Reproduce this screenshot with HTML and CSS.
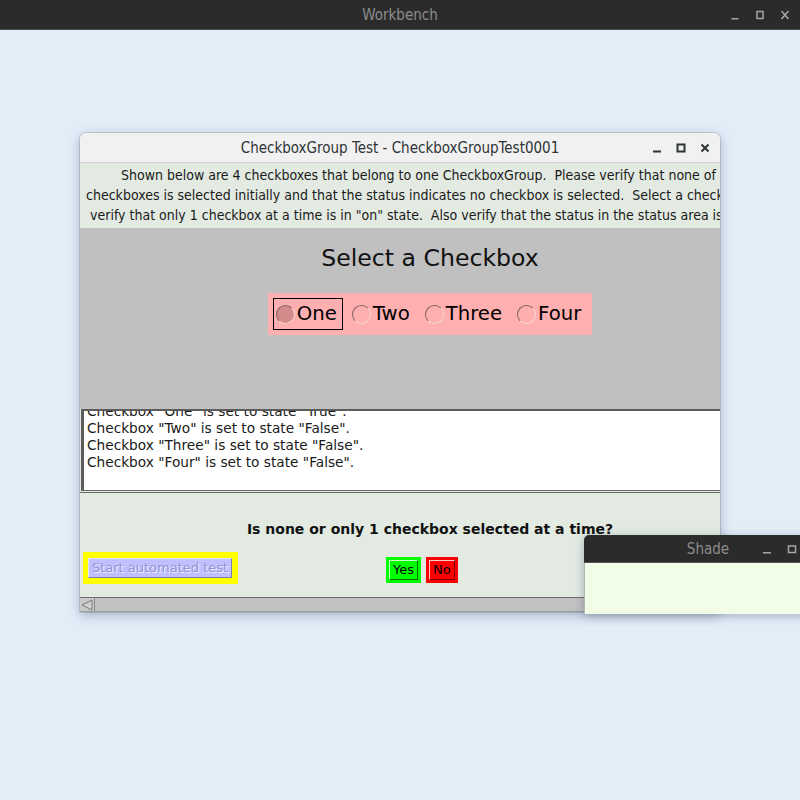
FILE: index.html
```html
<!DOCTYPE html>
<html>
<head>
<meta charset="utf-8">
<title>Workbench</title>
<link rel="stylesheet" href="styles.css">
</head>
<body>
<div class="desktop">
  <header class="topbar">
    <span></span>
    <span class="topbar-title">Workbench</span>
    <div class="wm-controls light">
      <svg class="ico" viewBox="0 0 10 10"><rect x="1.5" y="8" width="7" height="1.5"/></svg>
      <svg class="ico" viewBox="0 0 10 10"><rect class="st" x="2" y="1.5" width="6" height="7"/></svg>
      <svg class="ico" viewBox="0 0 10 10"><path class="st" d="M1.5 1 L8.5 9 M8.5 1 L1.5 9"/></svg>
    </div>
  </header>

  <div class="dialog">
    <div class="dlg-title">
      <span></span>
      <span class="dlg-title-text">CheckboxGroup Test - CheckboxGroupTest0001</span>
      <div class="wm-controls dark">
        <svg class="ico" viewBox="0 0 10 10"><rect x="1" y="7.5" width="8" height="2"/></svg>
        <svg class="ico" viewBox="0 0 10 10"><rect class="st" x="1.5" y="1.5" width="7" height="7"/></svg>
        <svg class="ico" viewBox="0 0 10 10"><path class="st" d="M1.5 1.5 L8.5 8.5 M8.5 1.5 L1.5 8.5"/></svg>
      </div>
    </div>
    <div class="dlg-body">
      <div class="inner">
        <div class="instructions">
          <div class="ins-line l1">Shown below are 4 checkboxes that belong to one CheckboxGroup.  Please verify that none of the</div>
          <div class="ins-line l2">checkboxes is selected initially and that the status indicates no checkbox is selected.  Select a checkbox and</div>
          <div class="ins-line l3">verify that only 1 checkbox at a time is in "on" state.  Also verify that the status in the status area is updated</div>
        </div>

        <div class="test-panel">
          <div class="heading">Select a Checkbox</div>
          <div class="group">
            <div class="cb focused"><span class="radio on"></span><span class="cb-label">One</span></div>
            <div class="cb"><span class="radio"></span><span class="cb-label">Two</span></div>
            <div class="cb"><span class="radio"></span><span class="cb-label">Three</span></div>
            <div class="cb"><span class="radio"></span><span class="cb-label">Four</span></div>
          </div>
        </div>

        <div class="status">
          <div class="status-lines">
            <div>Checkbox "One" is set to state "True".</div>
            <div>Checkbox "Two" is set to state "False".</div>
            <div>Checkbox "Three" is set to state "False".</div>
            <div>Checkbox "Four" is set to state "False".</div>
          </div>
        </div>

        <div class="question-panel">
          <div class="question">Is none or only 1 checkbox selected at a time?</div>
          <div class="actions">
            <div class="auto-wrap"><span class="auto-btn">Start automated test</span></div>
            <div class="yn">
              <span class="yn-btn yes"><span class="yn-face">Yes</span></span>
              <span class="yn-btn no"><span class="yn-face">No</span></span>
            </div>
          </div>
        </div>
      </div>
      <div class="hscroll">
        <span class="arrow-btn">
          <svg viewBox="0 0 14 12" width="14" height="12"><polygon points="2,6 12,1 12,11" fill="#d0d0d0" stroke="#7a7a7a" stroke-width="1"/></svg>
        </span>
        <span class="track"></span>
      </div>
    </div>
  </div>

  <div class="shade">
    <div class="shade-title">
      <span></span>
      <span class="shade-title-text">Shade</span>
      <div class="wm-controls light">
        <svg class="ico" viewBox="0 0 10 10"><rect x="1" y="8" width="8" height="1.5"/></svg>
        <svg class="ico" viewBox="0 0 10 10"><rect class="st" x="1.5" y="2" width="7" height="6.5"/></svg>
        <svg class="ico" viewBox="0 0 10 10"><path class="st" d="M1.5 1 L8.5 9 M8.5 1 L1.5 9"/></svg>
      </div>
    </div>
    <div class="shade-body"></div>
  </div>
</div>
</body>
</html>
```

FILE: styles.css
```css
* { box-sizing: border-box; }
html, body { margin: 0; padding: 0; }
body {
  width: 800px;
  height: 800px;
  overflow: hidden;
  background: #e3edf8;
  font-family: "DejaVu Sans", sans-serif;
}
.desktop { position: relative; width: 800px; height: 800px; }

/* window manager bars */
.topbar {
  height: 30px;
  background: #2b2b2b;
  border-bottom: 1px solid #4e4e4e;
  display: grid;
  grid-template-columns: 1fr auto 1fr;
  align-items: center;
}
.topbar-title, .shade-title-text {
  font-family: "DejaVu Sans Condensed", "DejaVu Sans", sans-serif;
  font-stretch: condensed;
  font-size: 15px;
  color: #8c8c8c;
}
.wm-controls {
  justify-self: end;
  display: flex;
  align-items: center;
  gap: 15px;
  padding-right: 10px;
}
.wm-controls .ico { width: 10px; height: 10px; display: block; }
.wm-controls.light .ico { fill: #a6a6a6; }
.wm-controls.light .st { fill: none; stroke: #a6a6a6; stroke-width: 1.5; }
.wm-controls.dark { gap: 14px; }
.wm-controls.dark .ico { fill: #2e3436; }
.wm-controls.dark .st { fill: none; stroke: #2e3436; stroke-width: 2; }

/* dialog */
.dialog {
  position: absolute;
  left: 80px;
  top: 133px;
  width: 640px;
  height: 479px;
  border-radius: 6px 6px 0 0;
  background: #e2eae2;
  box-shadow: 0 3px 12px rgba(40, 60, 90, 0.35), 0 0 0 1px rgba(0, 0, 0, 0.12);
  display: flex;
  flex-direction: column;
  overflow: hidden;
}
.dlg-title {
  height: 30px;
  flex: none;
  background: #f1f1f1;
  border-bottom: 1px solid #cfcfcf;
  display: grid;
  grid-template-columns: 1fr auto 1fr;
  align-items: center;
}
.dlg-title-text {
  font-family: "DejaVu Sans Condensed", "DejaVu Sans", sans-serif;
  font-stretch: condensed;
  font-size: 15px;
  color: #2e3436;
  padding-top: 1px;
}
.dlg-body {
  flex: 1;
  display: flex;
  flex-direction: column;
  overflow: hidden;
}
.inner { width: 700px; flex: 1; display: flex; flex-direction: column; }

.instructions {
  height: 65px;
  flex: none;
  background: #e2eae2;
  padding-top: 2px;
  font-family: "DejaVu Sans Condensed", "DejaVu Sans", sans-serif;
  font-stretch: condensed;
  font-size: 14px;
  color: #1a1a1a;
}
.ins-line { height: 20px; line-height: 20px; white-space: pre; }
.ins-line.l1 { padding-left: 41px; }
.ins-line.l2 { padding-left: 6px; }
.ins-line.l3 { padding-left: 10px; }

.test-panel {
  height: 181px;
  flex: none;
  background: #c0c0c0;
  display: flex;
  flex-direction: column;
  align-items: center;
  padding-top: 16px;
}
.heading {
  font-size: 23.6px;
  line-height: 28px;
  color: #111;
}
.group {
  margin-top: 21px;
  display: flex;
  gap: 6px;
  padding: 5px;
  background: #ffafaf;
}
.cb {
  display: flex;
  align-items: center;
  gap: 2px;
  height: 32px;
  padding: 0 5px 0 2px;
  border: 1px solid transparent;
}
.cb.focused { border-color: #000; }
.radio {
  width: 19px;
  height: 19px;
  border-radius: 50%;
  border: 1px solid;
  border-color: #7d6464 #f5d5d5 #f5d5d5 #7d6464;
  background: #ffafaf;
}
.radio.on { background: #d4898b; }
.cb-label { font-size: 19.7px; color: #000; line-height: 24px; }

.status {
  height: 82px;
  flex: none;
  margin-left: 1px;
  background: #fff;
  border-top: 2px solid #5c5c5c;
  border-left: 3px solid #5c5c5c;
  border-bottom: 1px solid #6b6b6b;
  overflow: hidden;
  padding-left: 3px;
}
.status-lines {
  margin-top: -8px;
  font-size: 13.7px;
  line-height: 17px;
  color: #1a1a1a;
}

.question-panel {
  flex: 1;
  margin-top: 1px;
  border-top: 1px solid #6b6b6b;
  background: #e2eae2;
  padding-top: 27px;
}
.question {
  text-align: center;
  font-size: 14px;
  font-weight: bold;
  line-height: 18px;
  color: #111;
}
.actions {
  display: flex;
  align-items: flex-start;
  margin-top: 14px;
  padding-left: 3px;
}
.auto-wrap {
  background: #ffff00;
  padding: 6px 6px 6px 5px;
}
.auto-btn {
  display: block;
  width: 144px;
  height: 20px;
  background: #c0c0ff;
  border: 1px solid;
  border-color: #e6e6ff #7c7caa #7c7caa #e6e6ff;
  font-size: 13px;
  line-height: 18px;
  text-align: center;
  color: #9494d4;
  text-shadow: 1px 1px 0 #eeeeff;
}
.yn {
  display: flex;
  gap: 5px;
  margin-left: 148px;
  margin-top: 5px;
}
.yn-btn { display: block; padding: 3px; }
.yn-btn.yes { background: #00ff00; }
.yn-btn.no { background: #ff0000; }
.yn-face {
  display: block;
  padding: 0 3px;
  font-size: 13px;
  line-height: 18px;
  color: #000;
  border: 1px solid;
}
.yes .yn-face { border-color: #c8ffc8 #007000 #007000 #c8ffc8; }
.no .yn-face { border-color: #ffc8c8 #800000 #800000 #ffc8c8; }

.hscroll {
  height: 15px;
  flex: none;
  display: flex;
  background: #c4c4c4;
  border-top: 1px solid #6e6e6e;
  border-bottom: 1px solid #9a9a9a;
}
.arrow-btn {
  width: 15px;
  display: flex;
  align-items: center;
  justify-content: center;
  border-right: 1px solid #8a8a8a;
  background: #cacaca;
}
.track { flex: 1; background: #c2c2c2; }

/* shade window */
.shade {
  position: absolute;
  left: 584px;
  top: 535px;
  width: 248px;
  height: 79px;
  border-radius: 5px 5px 0 0;
  overflow: hidden;
  box-shadow: 0 2px 10px rgba(40, 60, 90, 0.35);
  display: flex;
  flex-direction: column;
}
.shade-title {
  height: 28px;
  flex: none;
  background: #2b2b2b;
  border-bottom: 1px solid #555;
  display: grid;
  grid-template-columns: 1fr auto 1fr;
  align-items: center;
}
.shade-title .wm-controls { padding-right: 10px; }
.shade-body {
  flex: 1;
  background: #f1fde6;
  border-left: 1px solid #b5b5b5;
}
```
